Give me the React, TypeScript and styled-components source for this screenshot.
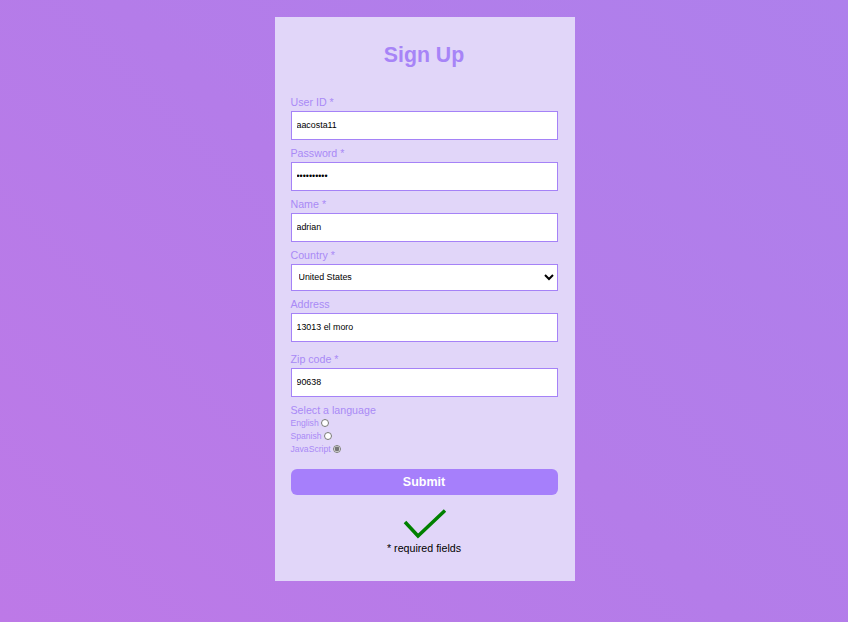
import React from "react";
import styled, { createGlobalStyle } from "styled-components";

const Global = createGlobalStyle`
  html, body { margin: 0; padding: 0; }
  body {
    min-height: 622px;
    background: linear-gradient(45deg, #bd79e7 0%, #b47ce9 50%, #ae80ec 100%);
    font-family: "Liberation Sans", Arial, sans-serif;
  }
`;

const Page = styled.div`
  display: flex;
  justify-content: center;
  padding-top: 17px;
  padding-left: 1px;
`;

const Card = styled.div`
  width: 300px;
  height: 564px;
  box-sizing: border-box;
  background: #e1d6f9;
  padding: 25px 17px 0 16px;
  display: flex;
  flex-direction: column;
`;

const Title = styled.h1`
  margin: 0 0 26.5px 0;
  font-size: 21.3px;
  line-height: 26px;
  font-weight: bold;
  color: #a784f7;
  text-align: center;
`;

const Form = styled.form`
  display: flex;
  flex-direction: column;
`;

const Field = styled.div<{ $extra?: number }>`
  display: flex;
  flex-direction: column;
  margin-bottom: ${(p) => 6 + (p.$extra ?? 0)}px;
`;

const Label = styled.label`
  font-size: 10.67px;
  line-height: 14px;
  color: #a98af6;
  margin-bottom: 2px;
`;

const Input = styled.input`
  box-sizing: border-box;
  height: 29px;
  width: 100%;
  margin: 0;
  border: 1px solid #a582f7;
  background: #fff;
  padding: 0 5px;
  font-family: "Liberation Sans", Arial, sans-serif;
  font-size: 8.9px;
  color: #000;
  outline: none;
`;

const Select = styled.select`
  box-sizing: border-box;
  height: 27px;
  width: 100%;
  margin: 0;
  border: 1px solid #a582f7;
  background: #fff;
  padding: 0 3px;
  font-family: "Liberation Sans", Arial, sans-serif;
  font-size: 8.9px;
  color: #000;
  outline: none;
`;

const LangGroup = styled.div`
  display: flex;
  flex-direction: column;
  margin-bottom: 13.5px;
`;

const LangTitle = styled.div`
  font-size: 10.67px;
  line-height: 14px;
  color: #a98af6;
`;

const RadioRow = styled.label`
  display: flex;
  align-items: center;
  height: 13px;
  font-size: 8.6px;
  color: #a98af6;
`;

const Radio = styled.input`
  width: 8.5px;
  height: 8.5px;
  margin: 0 0 0 2px;
  accent-color: #767676;
`;

const Button = styled.button`
  height: 26px;
  width: 100%;
  border: none;
  border-radius: 6px;
  background: #a67ffb;
  color: #fff;
  font-family: "Liberation Sans", Arial, sans-serif;
  font-weight: bold;
  font-size: 12.5px;
  padding-top: 1px;
  cursor: pointer;
`;

const Footer = styled.div`
  display: flex;
  flex-direction: column;
  align-items: center;
  margin-top: 14px;
`;

const Check = styled.svg`
  display: block;
  width: 46px;
  height: 33px;
  margin-left: 3px;
`;

const Note = styled.div`
  font-size: 10.67px;
  line-height: 13px;
  color: #000;
`;

export default function App() {
  return (
    <>
      <Global />
      <Page>
        <Card>
          <Title>Sign Up</Title>
          <Form onSubmit={(e) => e.preventDefault()}>
            <Field>
              <Label>User ID *</Label>
              <Input defaultValue="aacosta11" />
            </Field>
            <Field>
              <Label>Password *</Label>
              <Input type="password" defaultValue="aaaaaaaaaa" />
            </Field>
            <Field>
              <Label>Name *</Label>
              <Input defaultValue="adrian" />
            </Field>
            <Field>
              <Label>Country *</Label>
              <Select defaultValue="United States">
                <option>United States</option>
                <option>Canada</option>
                <option>Mexico</option>
              </Select>
            </Field>
            <Field $extra={4}>
              <Label>Address</Label>
              <Input defaultValue="13013 el moro" />
            </Field>
            <Field>
              <Label>Zip code *</Label>
              <Input defaultValue="90638" />
            </Field>
            <LangGroup>
              <LangTitle>Select a language</LangTitle>
              <RadioRow>
                English <Radio type="radio" name="lang" />
              </RadioRow>
              <RadioRow>
                Spanish <Radio type="radio" name="lang" />
              </RadioRow>
              <RadioRow>
                JavaScript <Radio type="radio" name="lang" defaultChecked />
              </RadioRow>
            </LangGroup>
            <Button type="submit">Submit</Button>
          </Form>
          <Footer>
            <Check viewBox="0 0 46 33">
              <polyline
                points="2,13 15,27 42,1.5"
                fill="none"
                stroke="#008000"
                strokeWidth="3.5"
              />
            </Check>
            <Note>* required fields</Note>
          </Footer>
        </Card>
      </Page>
    </>
  );
}
